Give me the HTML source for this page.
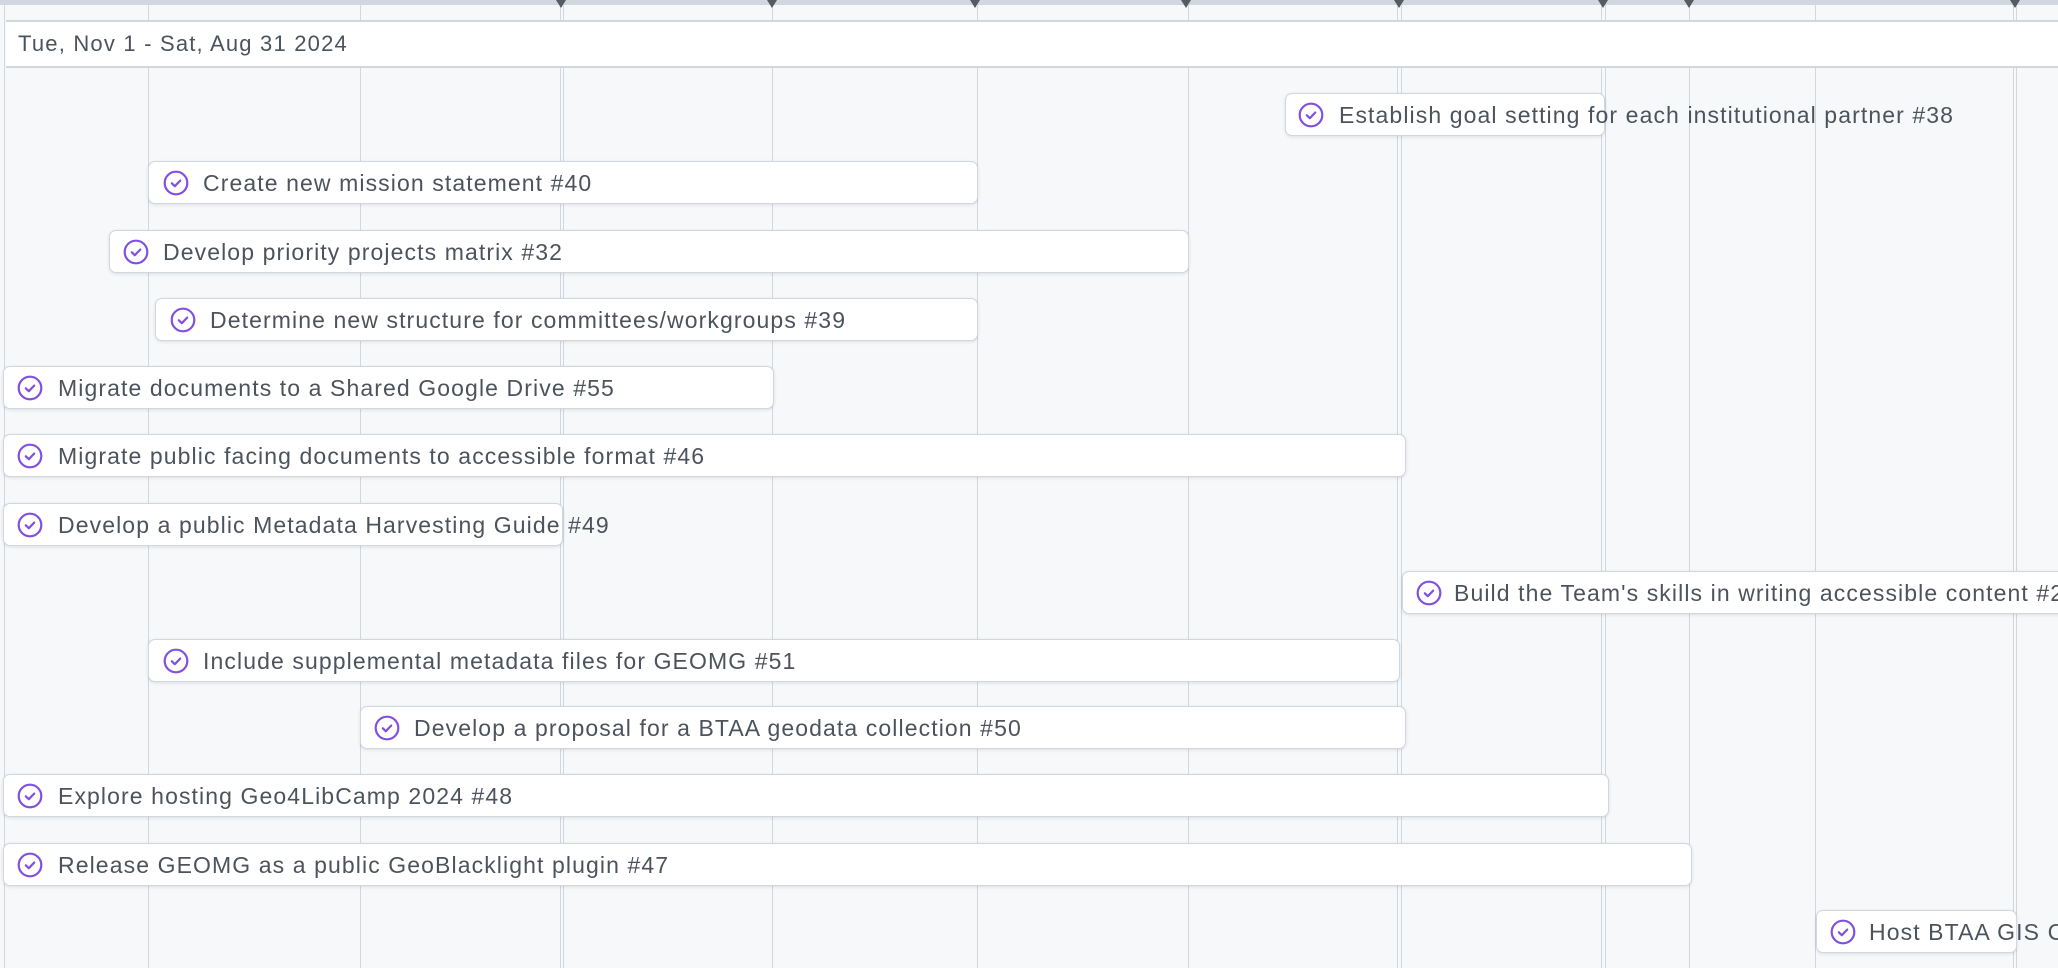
<!DOCTYPE html>
<html><head><meta charset="utf-8"><style>
html,body{margin:0;padding:0;width:2058px;height:968px;overflow:hidden;background:#f6f8fa;font-family:"Liberation Sans",sans-serif;}
#w{position:relative;width:2058px;height:968px;overflow:hidden;}
.top{position:absolute;left:0;top:0;width:2058px;height:5px;background:#d0d7de;}
.v{position:absolute;top:5px;height:963px;width:1px;background:#d0d7de;}
.hdr{position:absolute;left:6px;top:20px;width:2040px;height:44px;background:#fff;border-top:2px solid #d0d7de;border-bottom:2px solid #d0d7de;font-size:22px;letter-spacing:1.2px;color:#4d535c;line-height:44px;padding-left:12px;box-sizing:content-box;}
.m{position:absolute;top:0;width:0;height:0;border-left:5px solid transparent;border-right:5px solid transparent;border-top:8px solid #555b63;}
.bar{position:absolute;height:43px;background:#fff;border:1px solid #d0d7de;border-radius:7px;box-shadow:0 1px 3px rgba(31,35,40,0.12);box-sizing:border-box;}
.t{position:absolute;white-space:nowrap;font-size:23px;letter-spacing:1.1px;color:#4d535c;line-height:44px;}
.ic{position:absolute;width:26px;height:26px;}
</style></head><body><div id="w">
<div class="top"></div>
<div class="v" style="left:4px"></div>
<div class="v" style="left:148px"></div>
<div class="v" style="left:360px"></div>
<div class="v" style="left:560px"></div><div class="v" style="left:563px"></div>
<div class="v" style="left:772px"></div>
<div class="v" style="left:977px"></div>
<div class="v" style="left:1188px"></div>
<div class="v" style="left:1397px"></div><div class="v" style="left:1401px"></div>
<div class="v" style="left:1601px"></div><div class="v" style="left:1605px"></div>
<div class="v" style="left:1689px"></div>
<div class="v" style="left:1815px"></div>
<div class="v" style="left:2013px"></div><div class="v" style="left:2016px"></div>
<div class="m" style="left:556px"></div>
<div class="m" style="left:767px"></div>
<div class="m" style="left:970px"></div>
<div class="m" style="left:1181px"></div>
<div class="m" style="left:1394px"></div>
<div class="m" style="left:1598px"></div>
<div class="m" style="left:1684px"></div>
<div class="m" style="left:2010px"></div>
<div class="hdr">Tue, Nov 1 - Sat, Aug 31 2024</div>

<svg width="0" height="0" style="position:absolute"><defs><symbol id="ck" viewBox="0 0 26 26"><circle cx="13" cy="13" r="11.3" fill="none" stroke="#8250df" stroke-width="2.2"/><path d="M8.8 13.3l3 2.9 5.4-5.6" fill="none" stroke="#8250df" stroke-width="2.2" stroke-linecap="round" stroke-linejoin="round"/></symbol></defs></svg>

<div class="bar" style="left:1285px;top:93px;width:320px"></div>
<svg class="ic" style="left:1298px;top:102px"><use href="#ck"/></svg>
<div class="t" style="left:1339px;top:93px">Establish goal setting for each institutional partner #38</div>

<div class="bar" style="left:148px;top:161px;width:830px"></div>
<svg class="ic" style="left:163px;top:170px"><use href="#ck"/></svg>
<div class="t" style="left:203px;top:161px">Create new mission statement #40</div>

<div class="bar" style="left:109px;top:230px;width:1080px"></div>
<svg class="ic" style="left:123px;top:239px"><use href="#ck"/></svg>
<div class="t" style="left:163px;top:230px">Develop priority projects matrix #32</div>

<div class="bar" style="left:155px;top:298px;width:823px"></div>
<svg class="ic" style="left:170px;top:307px"><use href="#ck"/></svg>
<div class="t" style="left:210px;top:298px">Determine new structure for committees/workgroups #39</div>

<div class="bar" style="left:3px;top:366px;width:771px"></div>
<svg class="ic" style="left:17px;top:375px"><use href="#ck"/></svg>
<div class="t" style="left:58px;top:366px">Migrate documents to a Shared Google Drive #55</div>

<div class="bar" style="left:3px;top:434px;width:1403px"></div>
<svg class="ic" style="left:17px;top:443px"><use href="#ck"/></svg>
<div class="t" style="left:58px;top:434px">Migrate public facing documents to accessible format #46</div>

<div class="bar" style="left:3px;top:503px;width:560px"></div>
<svg class="ic" style="left:17px;top:512px"><use href="#ck"/></svg>
<div class="t" style="left:58px;top:503px">Develop a public Metadata Harvesting Guide #49</div>

<div class="bar" style="left:1402px;top:571px;width:670px"></div>
<svg class="ic" style="left:1416px;top:580px"><use href="#ck"/></svg>
<div class="t" style="left:1454px;top:571px">Build the Team's skills in writing accessible content #2</div>

<div class="bar" style="left:148px;top:639px;width:1252px"></div>
<svg class="ic" style="left:163px;top:648px"><use href="#ck"/></svg>
<div class="t" style="left:203px;top:639px">Include supplemental metadata files for GEOMG #51</div>

<div class="bar" style="left:360px;top:706px;width:1046px"></div>
<svg class="ic" style="left:374px;top:715px"><use href="#ck"/></svg>
<div class="t" style="left:414px;top:706px">Develop a proposal for a BTAA geodata collection #50</div>

<div class="bar" style="left:3px;top:774px;width:1606px"></div>
<svg class="ic" style="left:17px;top:783px"><use href="#ck"/></svg>
<div class="t" style="left:58px;top:774px">Explore hosting Geo4LibCamp 2024 #48</div>

<div class="bar" style="left:3px;top:843px;width:1689px"></div>
<svg class="ic" style="left:17px;top:852px"><use href="#ck"/></svg>
<div class="t" style="left:58px;top:843px">Release GEOMG as a public GeoBlacklight plugin #47</div>

<div class="bar" style="left:1816px;top:910px;width:201px"></div>
<svg class="ic" style="left:1830px;top:919px"><use href="#ck"/></svg>
<div class="t" style="left:1869px;top:910px">Host BTAA GIS Conference</div>
</div></body></html>
